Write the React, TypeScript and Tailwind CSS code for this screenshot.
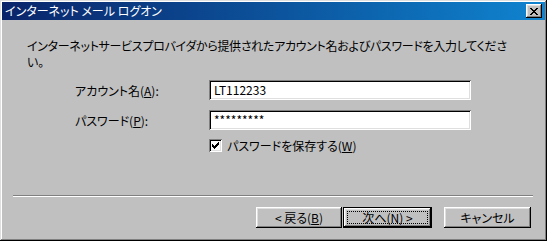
import React from 'react'

const FONT = "font-['Noto_Sans_CJK_JP','Noto_Sans',sans-serif] [font-feature-settings:'palt']"

const raised =
  'bg-[#c0c0c0] shadow-[inset_-1px_-1px_#000,inset_1px_1px_#fff,inset_-2px_-2px_#808080,inset_2px_2px_#dfdfdf]'

const sunken =
  'bg-white shadow-[inset_1px_1px_#808080,inset_-1px_-1px_#fff,inset_2px_2px_#000,inset_-2px_-2px_#dfdfdf]'

function CloseGlyph() {
  const px = [
    [0, 0], [1, 0], [6, 0], [7, 0],
    [1, 1], [2, 1], [5, 1], [6, 1],
    [2, 2], [3, 2], [4, 2], [5, 2],
    [3, 3], [4, 3],
    [2, 4], [3, 4], [4, 4], [5, 4],
    [1, 5], [2, 5], [5, 5], [6, 5],
    [0, 6], [1, 6], [6, 6], [7, 6],
  ]
  return (
    <svg width="8" height="7" viewBox="0 0 8 7" shapeRendering="crispEdges">
      {px.map(([x, y]) => (
        <rect key={`${x}-${y}`} x={x} y={y} width="1" height="1" fill="#000" />
      ))}
    </svg>
  )
}

function CheckGlyph() {
  const px = [
    [6, 0],
    [5, 1], [6, 1],
    [0, 2], [4, 2], [5, 2], [6, 2],
    [0, 3], [1, 3], [3, 3], [4, 3], [5, 3],
    [0, 4], [1, 4], [2, 4], [3, 4], [4, 4],
    [1, 5], [2, 5], [3, 5],
    [2, 6],
  ]
  return (
    <svg width="7" height="7" viewBox="0 0 7 7" shapeRendering="crispEdges">
      {px.map(([x, y]) => (
        <rect key={`${x}-${y}`} x={x} y={y} width="1" height="1" fill="#000" />
      ))}
    </svg>
  )
}

function Field({ label, hotkey, value }: { label: string; hotkey: string; value: string }) {
  return (
    <div className="flex items-center h-[20px]">
      <div className="w-[134px] text-[12px] leading-[15px]">
        {label}(<span className="underline">{hotkey}</span>):
      </div>
      <div className={`w-[262px] h-[20px] flex items-center pl-[5px] text-[12px] ${sunken}`}>
        {value}
      </div>
    </div>
  )
}

export default function App() {
  return (
    <div
      className={`w-[547px] h-[241px] p-[2px] flex flex-col bg-[#c0c0c0] text-black ${FONT} shadow-[inset_-1px_-1px_#000,inset_1px_1px_#dfdfdf,inset_-2px_-2px_#808080,inset_2px_2px_#fff]`}
    >
      {/* title bar */}
      <div className="h-[18px] flex items-center justify-between pl-[3px] pr-[3px] bg-gradient-to-r from-[#0a246a] to-[#1084d0]">
        <span className="text-white text-[12px] leading-[14px]">インターネット メール ログオン</span>
        <div className={`w-[16px] h-[14px] flex items-center justify-center ${raised}`}>
          <CloseGlyph />
        </div>
      </div>

      <div className="flex flex-col pl-[11px] pr-[12px]">
        <p className="pl-[14px] pt-[18px] text-[12px] leading-[16px] tracking-[-0.3px] whitespace-nowrap">
          インターネットサービスプロバイダから提供されたアカウント名およびパスワードを入力してくださ
          <br />
          い。
        </p>

        <div className="flex flex-col pl-[62px] mt-[10px]">
          <Field label="アカウント名" hotkey="A" value="LT112233" />
          <div className="mt-[10px]">
            <Field label="パスワード" hotkey="P" value="*********" />
          </div>
          <div className="flex items-center mt-[9px] pl-[134px] h-[13px]">
            <div className={`w-[13px] h-[13px] flex items-center justify-center ${sunken}`}>
              <CheckGlyph />
            </div>
            <span className="ml-[5px] text-[12px] leading-[15px]">
              パスワードを保存する(<span className="underline">W</span>)
            </span>
          </div>
        </div>

        <div className="mt-[43px] h-[2px] border-t border-t-[#808080] border-b border-b-white" />

        <div className="flex justify-end mt-[10px] pr-[2px]">
          <div className={`w-[86px] h-[21px] flex items-center justify-center text-[12px] ${raised}`}>
            &lt; 戻る(<span className="underline">B</span>)
          </div>
          <div className="ml-[1px] w-[89px] h-[21px] border border-black relative">
            <div className={`w-full h-full flex items-center justify-center text-[12px] ${raised}`}>
              次へ(N) &gt;
            </div>
            <div className="absolute inset-[3px] border border-dotted border-black" />
          </div>
          <div className={`ml-[12px] w-[87px] h-[21px] flex items-center justify-center text-[12px] ${raised}`}>
            キャンセル
          </div>
        </div>
      </div>
    </div>
  )
}
